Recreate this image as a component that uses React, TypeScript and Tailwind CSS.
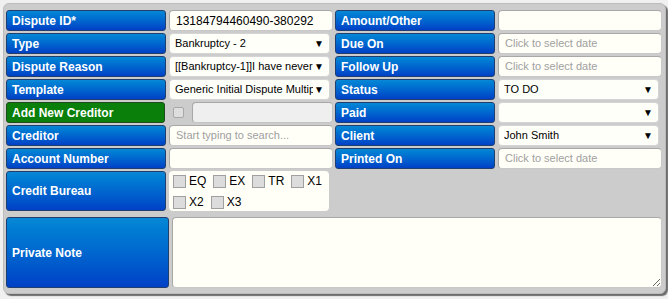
import React from "react"

const font = { fontFamily: '"Liberation Sans", Arial, sans-serif' }

const Label = ({ children, green, className = "" }: { children: React.ReactNode; green?: boolean; className?: string }) => (
  <div
    className={`flex items-center rounded-[3px] border pl-[5px] text-[12px] font-bold text-white ${
      green
        ? "border-[#1f4d1f] bg-[#0a7f0a]"
        : "border-[#213f6e] bg-gradient-to-b from-[#0a88d6] to-[#0040c6]"
    } ${className}`}
  >
    {children}
  </div>
)

const Input = ({ value, placeholder }: { value?: string; placeholder?: string }) => (
  <div className="flex h-[21px] w-[164px] items-center overflow-hidden whitespace-nowrap rounded-[4px] border border-[#c8c8c8] border-l-[#a8a8a8] border-t-[#a8a8a8] bg-[#fffff8] pl-[6px]">
    {value ? (
      <span className="text-[12px] text-black">{value}</span>
    ) : (
      <span className="text-[11px] text-[#a0a0a0]">{placeholder}</span>
    )}
  </div>
)

const Select = ({ value }: { value?: string }) => (
  <div className="flex h-[21px] w-[161px] items-center rounded-[4px] border border-[#d4d4d4] bg-[#fffffa] pl-[5px] pr-[5px] text-[11px] text-black">
    <span className="min-w-0 flex-1 overflow-hidden whitespace-nowrap">{value}</span>
    <span className="ml-[1px] text-[10px] leading-none">▼</span>
  </div>
)

const Check = ({ label }: { label: string }) => (
  <div className="flex items-center gap-[3px] leading-[18px]">
    <span className="h-[13px] w-[13px] border border-[#a0a0a0] bg-[#dcdcdc]" />
    <span className="text-[12px] text-black">{label}</span>
  </div>
)

const Row = ({ children }: { children: React.ReactNode }) => <div className="flex h-[21px] gap-[3px]">{children}</div>

export default function App() {
  return (
    <div className="h-[299px] w-[668px] bg-[#f0f0f0] pl-[3px] pt-[3px]" style={font}>
      <div className="h-[291px] w-[663px] rounded-[6px] border border-[#bcbcbc] bg-[#cccccc] pl-[2px] pr-[3px] pt-[6px] shadow-[2px_2px_1px_rgba(0,0,0,0.55)]">
        <div className="flex gap-[2px]">
          <div className="flex w-[327px] flex-col gap-[2px]">
            <Row>
              <Label className="w-[160px]">Dispute ID*</Label>
              <Input value="13184794460490-380292" />
            </Row>
            <Row>
              <Label className="w-[160px]">Type</Label>
              <Select value="Bankruptcy - 2" />
            </Row>
            <Row>
              <Label className="w-[160px]">Dispute Reason</Label>
              <Select value="[[Bankruptcy-1]]I have never" />
            </Row>
            <Row>
              <Label className="w-[160px]">Template</Label>
              <Select value="Generic Initial Dispute Multip" />
            </Row>
            <Row>
              <Label green className="w-[160px]">Add New Creditor</Label>
              <div className="flex items-center gap-[8px] pl-[5px]">
                <span className="h-[11px] w-[11px] rounded-[2px] border border-[#a8a8a8] bg-[#dedede]" />
                <div className="h-[21px] w-[141px] rounded-[4px] border border-[#c4c4c4] border-l-[#a8a8a8] border-t-[#a8a8a8] bg-[#efefef]" />
              </div>
            </Row>
            <Row>
              <Label className="w-[160px]">Creditor</Label>
              <Input placeholder="Start typing to search..." />
            </Row>
            <Row>
              <Label className="w-[160px]">Account Number</Label>
              <Input />
            </Row>
            <div className="flex h-[40px] gap-[3px]">
              <Label className="w-[160px]">Credit Bureau</Label>
              <div className="flex w-[160px] flex-col gap-[3px] rounded-[4px] bg-[#fffff8] pl-[4px] pt-[1px]">
                <div className="flex gap-[7px]">
                  <Check label="EQ" />
                  <Check label="EX" />
                  <Check label="TR" />
                  <Check label="X1" />
                </div>
                <div className="flex gap-[7px]">
                  <Check label="X2" />
                  <Check label="X3" />
                </div>
              </div>
            </div>
          </div>
          <div className="flex w-[327px] flex-col gap-[2px]">
            <Row>
              <Label className="w-[160px]">Amount/Other</Label>
              <Input />
            </Row>
            <Row>
              <Label className="w-[160px]">Due On</Label>
              <Input placeholder="Click to select date" />
            </Row>
            <Row>
              <Label className="w-[160px]">Follow Up</Label>
              <Input placeholder="Click to select date" />
            </Row>
            <Row>
              <Label className="w-[160px]">Status</Label>
              <Select value="TO DO" />
            </Row>
            <Row>
              <Label className="w-[160px]">Paid</Label>
              <Select />
            </Row>
            <Row>
              <Label className="w-[160px]">Client</Label>
              <Select value="John Smith" />
            </Row>
            <Row>
              <Label className="w-[160px]">Printed On</Label>
              <Input placeholder="Click to select date" />
            </Row>
          </div>
        </div>
        <div className="mt-[6px] flex h-[71px] gap-[3px]">
          <Label className="w-[163px]">Private Note</Label>
          <textarea
            readOnly
            className="h-[71px] w-[491px] rounded-[4px] border border-[#c8c8c8] border-l-[#a8a8a8] border-t-[#a8a8a8] bg-[#fffff8] outline-none"
          />
        </div>
      </div>
    </div>
  )
}
